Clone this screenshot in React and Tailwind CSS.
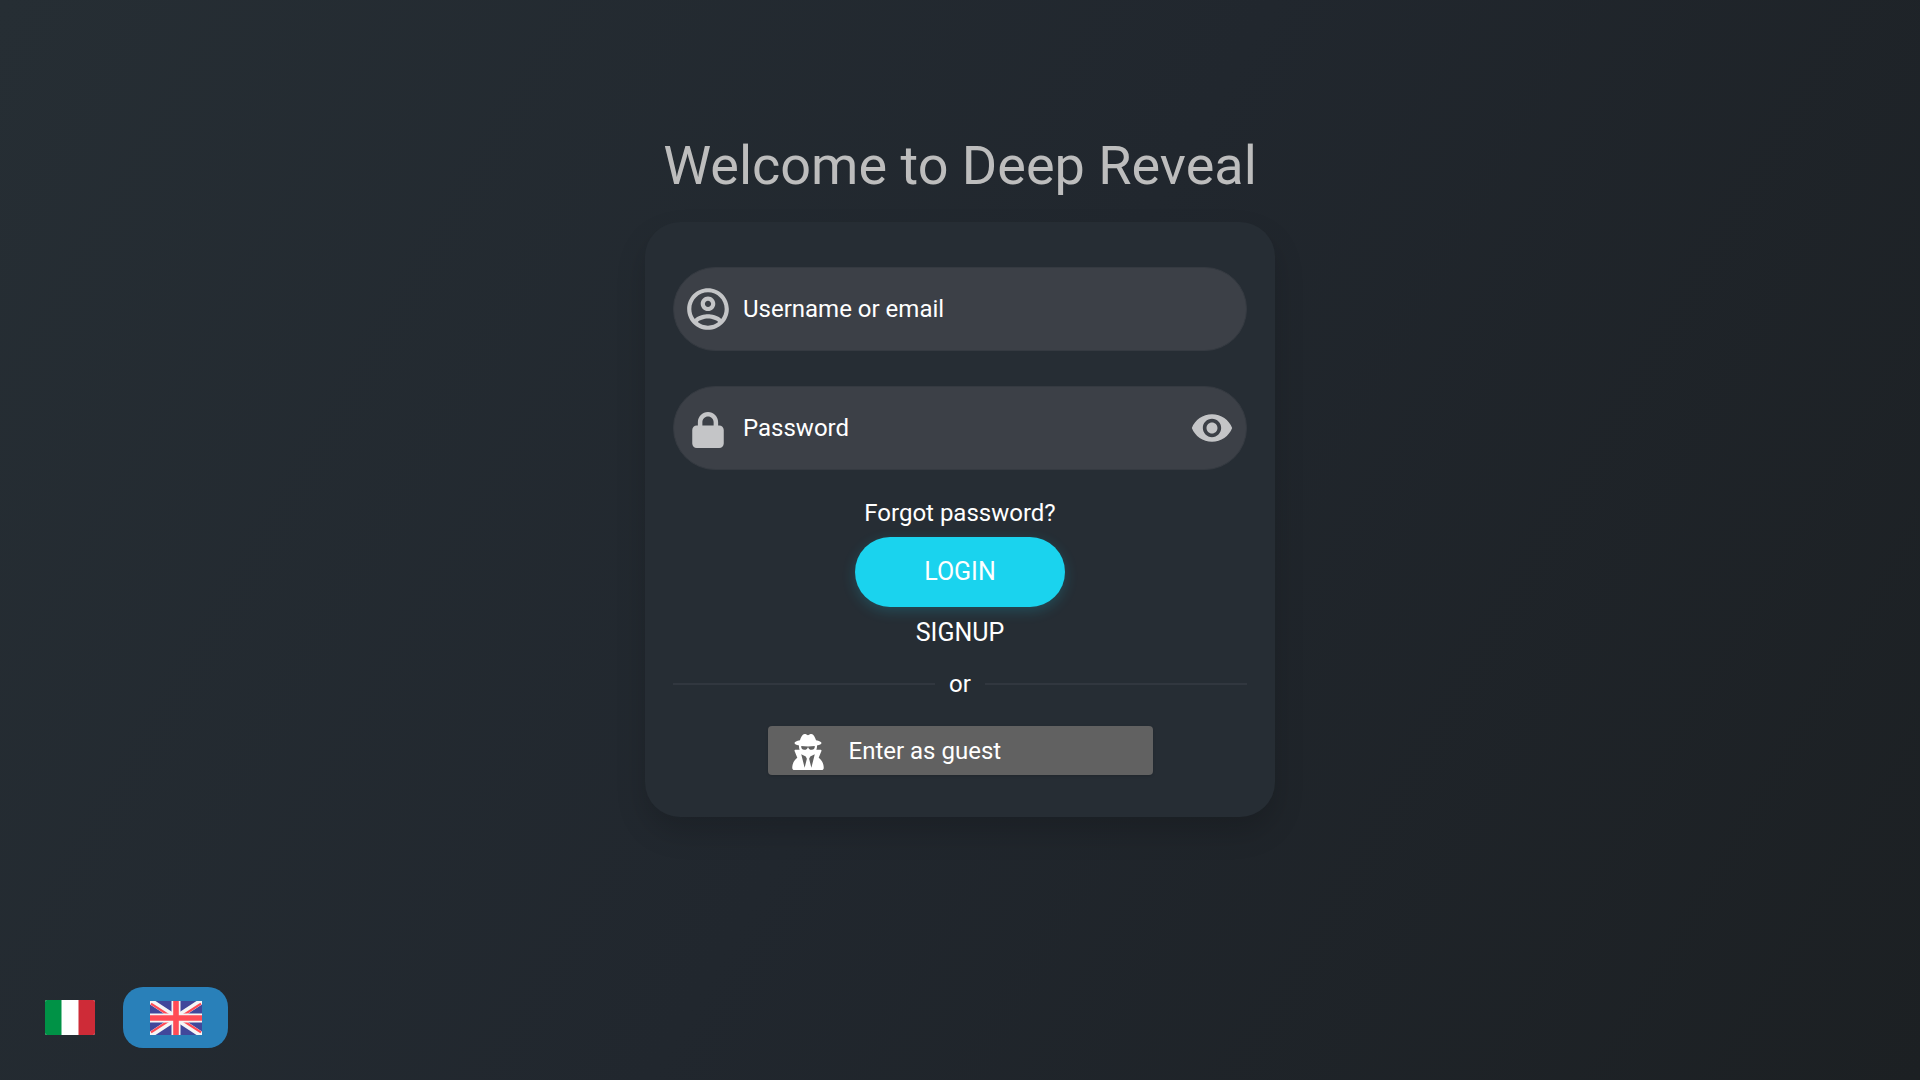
import { useState } from "react";
import { FaLock, FaUserSecret } from "react-icons/fa6";
import { MdVisibility } from "react-icons/md";

function AccountIcon({ className }) {
  return (
    <svg viewBox="0 0 24 24" fill="currentColor" className={className} aria-hidden="true">
      <path d="M12 2C6.48 2 2 6.48 2 12s4.48 10 10 10 10-4.48 10-10S17.52 2 12 2zM7.07 18.28c.43-.9 3.05-1.78 4.93-1.78s4.51.88 4.93 1.78C15.57 19.36 13.86 20 12 20s-3.57-.64-4.93-1.72zm11.29-1.45c-1.43-1.74-4.9-2.33-6.36-2.33s-4.93.59-6.36 2.33C4.62 15.49 4 13.82 4 12c0-4.41 3.59-8 8-8s8 3.59 8 8c0 1.82-.62 3.49-1.64 4.83zM12 6c-1.94 0-3.5 1.56-3.5 3.5S10.06 13 12 13s3.5-1.56 3.5-3.5S13.94 6 12 6zm0 5c-.83 0-1.5-.67-1.5-1.5S11.17 8 12 8s1.5.67 1.5 1.5S12.83 11 12 11z" />
    </svg>
  );
}

function ItalianFlag() {
  return (
    <svg viewBox="0 0 50 35" className="h-[35px] w-[50px] rounded-xs" aria-hidden="true">
      <rect width="50" height="35" fill="#fff" />
      <rect width="16.5" height="35" fill="#009246" />
      <rect x="33.5" width="16.5" height="35" fill="#ce2b37" />
    </svg>
  );
}

function BritishFlag() {
  return (
    <svg viewBox="0 0 52 34" className="h-[34px] w-[52px]" aria-hidden="true">
      <rect width="52" height="34" fill="#41479b" />
      <path d="M0 0L52 34M52 0L0 34" stroke="#f5f5f5" strokeWidth="6" />
      <path d="M1 2.6L20 15M51 31.4L32 19M51 2.6L32 15M1 31.4L20 19" stroke="#ff4b55" strokeWidth="2.2" />
      <path d="M26 0V34M0 17H52" stroke="#f5f5f5" strokeWidth="9" />
      <path d="M26 0V34M0 17H52" stroke="#ff4b55" strokeWidth="5.6" />
    </svg>
  );
}

function Field({ icon, children, ...input }) {
  return (
    <div className="flex h-[84px] items-center rounded-full border border-[#353a41] bg-[#3c4047] pr-3 text-[#c4c5c7]">
      <label htmlFor={input.id} className="flex w-[67px] shrink-0 justify-center">
        {icon}
      </label>
      <input
        {...input}
        aria-label={input.placeholder}
        className="min-w-0 flex-1 bg-transparent pl-0.5 text-2xl text-white outline-none placeholder:text-white placeholder:opacity-100"
      />
      {children}
    </div>
  );
}

export default function App() {
  const [visible, setVisible] = useState(false);
  return (
    <div className="flex min-h-screen flex-col bg-linear-[120deg] from-[#262e34] via-[#21272e] to-[#1c2023] font-['Roboto',sans-serif] text-2xl text-white">
      <main className="flex flex-1 flex-col items-center pt-[134px]">
        <h1 className="text-[54px] leading-[64px] text-[#bdbdbd]">Welcome to Deep Reveal</h1>
        <form
          className="mt-6 flex w-full max-w-[630px] flex-col rounded-[35px] bg-[#262d34] px-7 pt-[45px] pb-[42px] shadow-[0_15px_30px_rgba(0,0,0,0.16)]"
          onSubmit={(e) => e.preventDefault()}
        >
          <div className="flex flex-col gap-[35px]">
            <Field id="username" type="text" placeholder="Username or email" icon={<AccountIcon className="size-[50px]" />} />
            <Field
              id="password"
              type={visible ? "text" : "password"}
              placeholder="Password"
              icon={<FaLock className="mt-1 h-9 w-8" />}
            >
              <button type="button" aria-label="Show password" onClick={() => setVisible(!visible)}>
                <MdVisibility className="size-11" />
              </button>
            </Field>
          </div>
          <div className="mt-[29px] flex flex-col items-center">
            <a href="#forgot" className="leading-7">Forgot password?</a>
            <button
              type="submit"
              className="mt-[10px] h-[70px] w-[210px] rounded-full bg-[#1ad3ee] text-[25px] shadow-[0_4px_14px_rgba(26,211,238,0.2)]"
            >
              LOGIN
            </button>
            <a href="#signup" className="mt-3 text-[25px] leading-7">SIGNUP</a>
          </div>
          <div className="mt-[23px] flex items-center gap-[14px]">
            <span className="h-0.5 flex-1 bg-[#31373f]" />
            <span className="leading-7">or</span>
            <span className="h-0.5 flex-1 bg-[#31373f]" />
          </div>
          <button
            type="button"
            className="mt-7 flex h-[49px] w-[385px] items-center self-center rounded bg-[#616161] pl-6 shadow-sm"
          >
            <FaUserSecret className="mt-0.5 h-9 w-8" />
            <span className="ml-[25px]">Enter as guest</span>
          </button>
        </form>
      </main>
      <nav aria-label="Language" className="flex items-center pb-8 pl-[45px]">
        <button type="button" aria-label="Italiano">
          <ItalianFlag />
        </button>
        <button
          type="button"
          aria-label="English"
          aria-pressed="true"
          className="ml-7 flex h-[61px] w-[105px] items-center justify-center rounded-[20px] bg-[#2980b9]"
        >
          <BritishFlag />
        </button>
      </nav>
    </div>
  );
}
